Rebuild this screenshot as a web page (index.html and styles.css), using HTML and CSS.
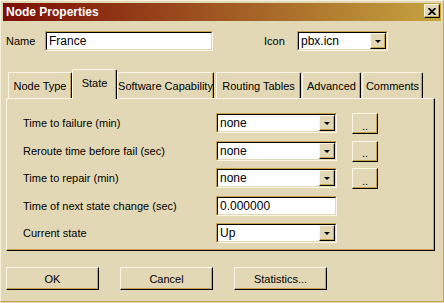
FILE: index.html
```html
<!DOCTYPE html>
<html lang="en">
<head>
    <meta name="viewport" content="width=device-width, initial-scale=1.0">
    <title>Node Properties</title>
    <link rel="stylesheet" href="styles.css">
</head>
<body>
    <div class="window">
        <div class="titlebar">
            <span class="title">Node Properties</span>
            <div class="close">
                <svg width="8" height="7" viewBox="0 0 8 7">
                    <path d="M0.5 0 L7.5 7 M7.5 0 L0.5 7" stroke="#000" stroke-width="1.8" fill="none"/>
                </svg>
            </div>
        </div>
        <div class="content">
            <div class="top-row">
                <span class="lbl-name">Name</span>
                <div class="sunken name-field"><div class="sunken-inner"><span class="value">France</span></div></div>
                <span class="lbl-icon">Icon</span>
                <div class="sunken icon-combo">
                    <div class="sunken-inner">
                        <span class="value">pbx.icn</span>
                        <span class="drop"><i class="arrow"></i></span>
                    </div>
                </div>
            </div>

            <div class="tabs">
                <div class="tab tab-type">Node Type</div>
                <div class="tab tab-state active">State</div>
                <div class="tab tab-soft">Software Capability</div>
                <div class="tab tab-route">Routing Tables</div>
                <div class="tab tab-adv">Advanced</div>
                <div class="tab tab-comm">Comments</div>
            </div>

            <div class="panel">
                <div class="form-grid">
                    <span class="row-label">Time to failure (min)</span>
                    <div class="sunken"><div class="sunken-inner"><span class="value">none</span><span class="drop"><i class="arrow"></i></span></div></div>
                    <div class="btn small">..</div>

                    <span class="row-label">Reroute time before fail (sec)</span>
                    <div class="sunken"><div class="sunken-inner"><span class="value">none</span><span class="drop"><i class="arrow"></i></span></div></div>
                    <div class="btn small">..</div>

                    <span class="row-label">Time to repair (min)</span>
                    <div class="sunken"><div class="sunken-inner"><span class="value">none</span><span class="drop"><i class="arrow"></i></span></div></div>
                    <div class="btn small">..</div>

                    <span class="row-label">Time of next state change (sec)</span>
                    <div class="sunken"><div class="sunken-inner"><span class="value">0.000000</span></div></div>
                    <span></span>

                    <span class="row-label">Current state</span>
                    <div class="sunken"><div class="sunken-inner"><span class="value">Up</span><span class="drop"><i class="arrow"></i></span></div></div>
                    <span></span>
                </div>
            </div>

            <div class="actions">
                <div class="btn">OK</div>
                <div class="btn">Cancel</div>
                <div class="btn">Statistics...</div>
            </div>
        </div>
    </div>
</body>
</html>
```

FILE: styles.css
```css
body {
    margin: 0;
    font-family: "Liberation Sans", Arial, sans-serif;
    font-size: 11px;
    color: #000;
    background: #e3d8b5;
}
.window {
    width: 444px;
    height: 302px;
    box-sizing: border-box;
    border: 1px solid;
    border-color: #f7f0dc #c4a34c #c4a34c #f7f0dc;
    padding: 2px;
    background: #e3d8b5;
}
.titlebar {
    height: 18px;
    display: flex;
    justify-content: space-between;
    align-items: center;
    padding: 0 1px 0 3px;
    background: linear-gradient(90deg, #7c0d05, #c5a43f);
}
.title {
    color: #fff;
    font-weight: bold;
    font-size: 12px;
}
.close {
    width: 16px;
    height: 14px;
    box-sizing: border-box;
    align-self: flex-start;
    margin-top: 1px;
    border: 1px solid;
    border-color: #fbf6e6 #000 #000 #fbf6e6;
    box-shadow: inset -1px -1px #c4a34c;
    background: #e3d8b5;
    display: flex;
    align-items: center;
    justify-content: center;
}
.content {
    padding: 0 3px;
}
.top-row {
    display: flex;
    align-items: center;
    margin-top: 10px;
    height: 20px;
}
.lbl-name {
    width: 39px;
}
.name-field {
    width: 168px;
}
.lbl-icon {
    width: 33px;
    margin-left: 51px;
}
.icon-combo {
    width: 91px;
}

/* sunken fields */
.sunken {
    height: 20px;
    box-sizing: border-box;
    border: 1px solid;
    border-color: #c4a34c #fbf6e6 #fbf6e6 #c4a34c;
}
.sunken-inner {
    height: 100%;
    box-sizing: border-box;
    border: 1px solid;
    border-color: #000 #e3d8b5 #e3d8b5 #000;
    background: #fff;
    display: flex;
}
.value {
    flex: 1;
    padding-left: 2px;
    line-height: 16px;
    font-size: 12px;
}
.drop {
    width: 16px;
    box-sizing: border-box;
    border: 1px solid;
    border-color: #fbf6e6 #000 #000 #fbf6e6;
    box-shadow: inset -1px -1px #c4a34c;
    background: #e3d8b5;
    display: flex;
    align-items: center;
    justify-content: center;
}
.arrow {
    width: 0;
    height: 0;
    border-left: 3px solid transparent;
    border-right: 3px solid transparent;
    border-top: 3px solid #000;
    margin-top: 1px;
}

/* tabs */
.tabs {
    display: flex;
    align-items: flex-end;
    height: 29px;
    margin-top: 18px;
    padding-left: 2px;
}
.tab {
    height: 26px;
    box-sizing: border-box;
    border: 1px solid #fbf6e6;
    border-right-color: #000;
    border-bottom: none;
    border-radius: 2px 2px 0 0;
    box-shadow: inset -1px 0 #c4a34c;
    display: flex;
    align-items: center;
    justify-content: center;
    white-space: nowrap;
}
.tab.active {
    height: 30px;
    margin-bottom: -1px;
    padding-bottom: 3px;
    position: relative;
    z-index: 1;
    background: #e3d8b5;
}
.tab-type { width: 64px; }
.tab-state { width: 45px; }
.tab-soft { width: 97px; }
.tab-route { width: 85px; margin-left: 2px; }
.tab-adv { width: 59px; margin-left: 1px; }
.tab-comm { width: 61px; margin-left: 1px; }

.panel {
    width: 429px;
    height: 153px;
    box-sizing: border-box;
    border: 1px solid;
    border-color: #fbf6e6 #000 #000 #fbf6e6;
    box-shadow: inset -1px -1px #c4a34c;
    padding: 14px 0 0 16px;
}
.form-grid {
    display: grid;
    grid-template-columns: 193px 121px 41px;
    grid-auto-rows: 20px;
    row-gap: 7.5px;
}
.row-label {
    align-self: center;
}

/* raised buttons */
.btn {
    width: 93px;
    height: 23px;
    box-sizing: border-box;
    border: 1px solid;
    border-color: #fbf6e6 #000 #000 #fbf6e6;
    box-shadow: inset -1px -1px #c4a34c;
    background: #e3d8b5;
    display: flex;
    align-items: center;
    justify-content: center;
}
.btn.small {
    width: 26px;
    height: 21px;
    margin-left: 15px;
    padding-top: 4px;
}
.actions {
    display: flex;
    gap: 21px;
    margin-top: 16px;
}
```
